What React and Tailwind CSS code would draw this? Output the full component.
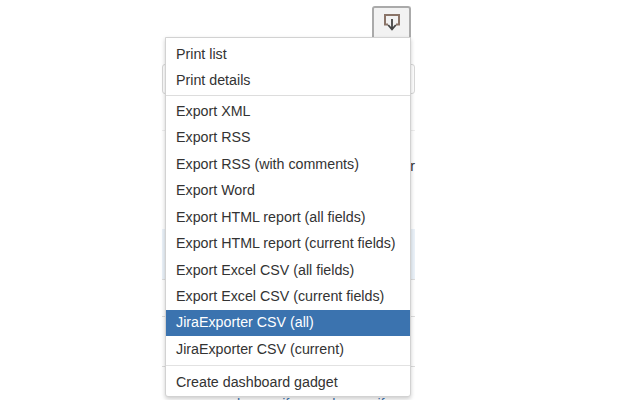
import React from "react";

const printItems = ["Print list", "Print details"];
const exportItems = [
  "Export XML",
  "Export RSS",
  "Export RSS (with comments)",
  "Export Word",
  "Export HTML report (all fields)",
  "Export HTML report (current fields)",
  "Export Excel CSV (all fields)",
  "Export Excel CSV (current fields)",
  "JiraExporter CSV (all)",
  "JiraExporter CSV (current)",
];

const Item = ({ label }) => (
  <div
    className={
      "h-[26.45px] px-[10px] flex items-center whitespace-nowrap text-[14.25px] " +
      (label === "JiraExporter CSV (all)" ? "bg-[#3b73af] text-white" : "text-[#333333]")
    }
  >
    {label}
  </div>
);

export default function App() {
  return (
    <div className="relative w-[640px] h-[400px] overflow-hidden bg-white font-['Liberation_Sans',Arial,sans-serif]">
      {/* page left behind the menu */}
      <div className="ml-[162px] w-[253px] flex flex-col">
        <div className="flex justify-end pt-[6px] pr-[4px]">
          <button className="w-[39px] h-[32px] pb-[3px] flex items-center justify-center rounded-t-[3px] border-2 border-b-0 border-[#aaaaaa] bg-[#f2f2f2]">
            <svg width="20" height="20" viewBox="0 0 20 20" fill="none">
              <path d="M6 12.5H3V3H17V12.5H14" stroke="#8a7468" strokeWidth="2" />
              <path d="M10 7V17M6.2 13L10 17.3L13.8 13" stroke="#444444" strokeWidth="1.8" />
            </svg>
          </button>
        </div>
        <div className="h-[30px] mt-[26px] rounded-[3px] border border-[#d8d8d8]" />
        <div className="h-px mt-[36px] bg-[#eeeeee]" />
        <div className="h-[16px] mt-[27px] text-right text-[14.25px] leading-[16px] text-[#333333]">r</div>
        <div className="h-[51px] mt-[55px] bg-[#ebf2f9] border-b border-[#dddddd]" />
        <div className="h-px mt-[36px] bg-[#dddddd]" />
        <div className="h-px mt-[49px] bg-[#dddddd]" />
        <div className="mt-[29px] pl-[75px] flex gap-[43px] text-[14.25px] leading-[16px] text-[#3b73af] whitespace-nowrap">
          <span>known if</span>
          <span>known if</span>
        </div>
      </div>

      {/* dropdown sits on top of the page */}
      <div className="absolute left-[165px] top-[37px] w-[246px] h-[360px] bg-white border border-[#d2d2d2] rounded-b-[3px] shadow-[0_2px_4px_rgba(0,0,0,0.2)] pt-[3px]">
        {printItems.map((label) => (
          <Item key={label} label={label} />
        ))}
        <div className="h-px bg-[#dddddd] mt-[1px] mb-[2.5px]" />
        {exportItems.map((label) => (
          <Item key={label} label={label} />
        ))}
        <div className="h-[1.5px] bg-[#e2e2e2] mt-[2px] mb-[3.5px]" />
        <Item label="Create dashboard gadget" />
      </div>
    </div>
  );
}
